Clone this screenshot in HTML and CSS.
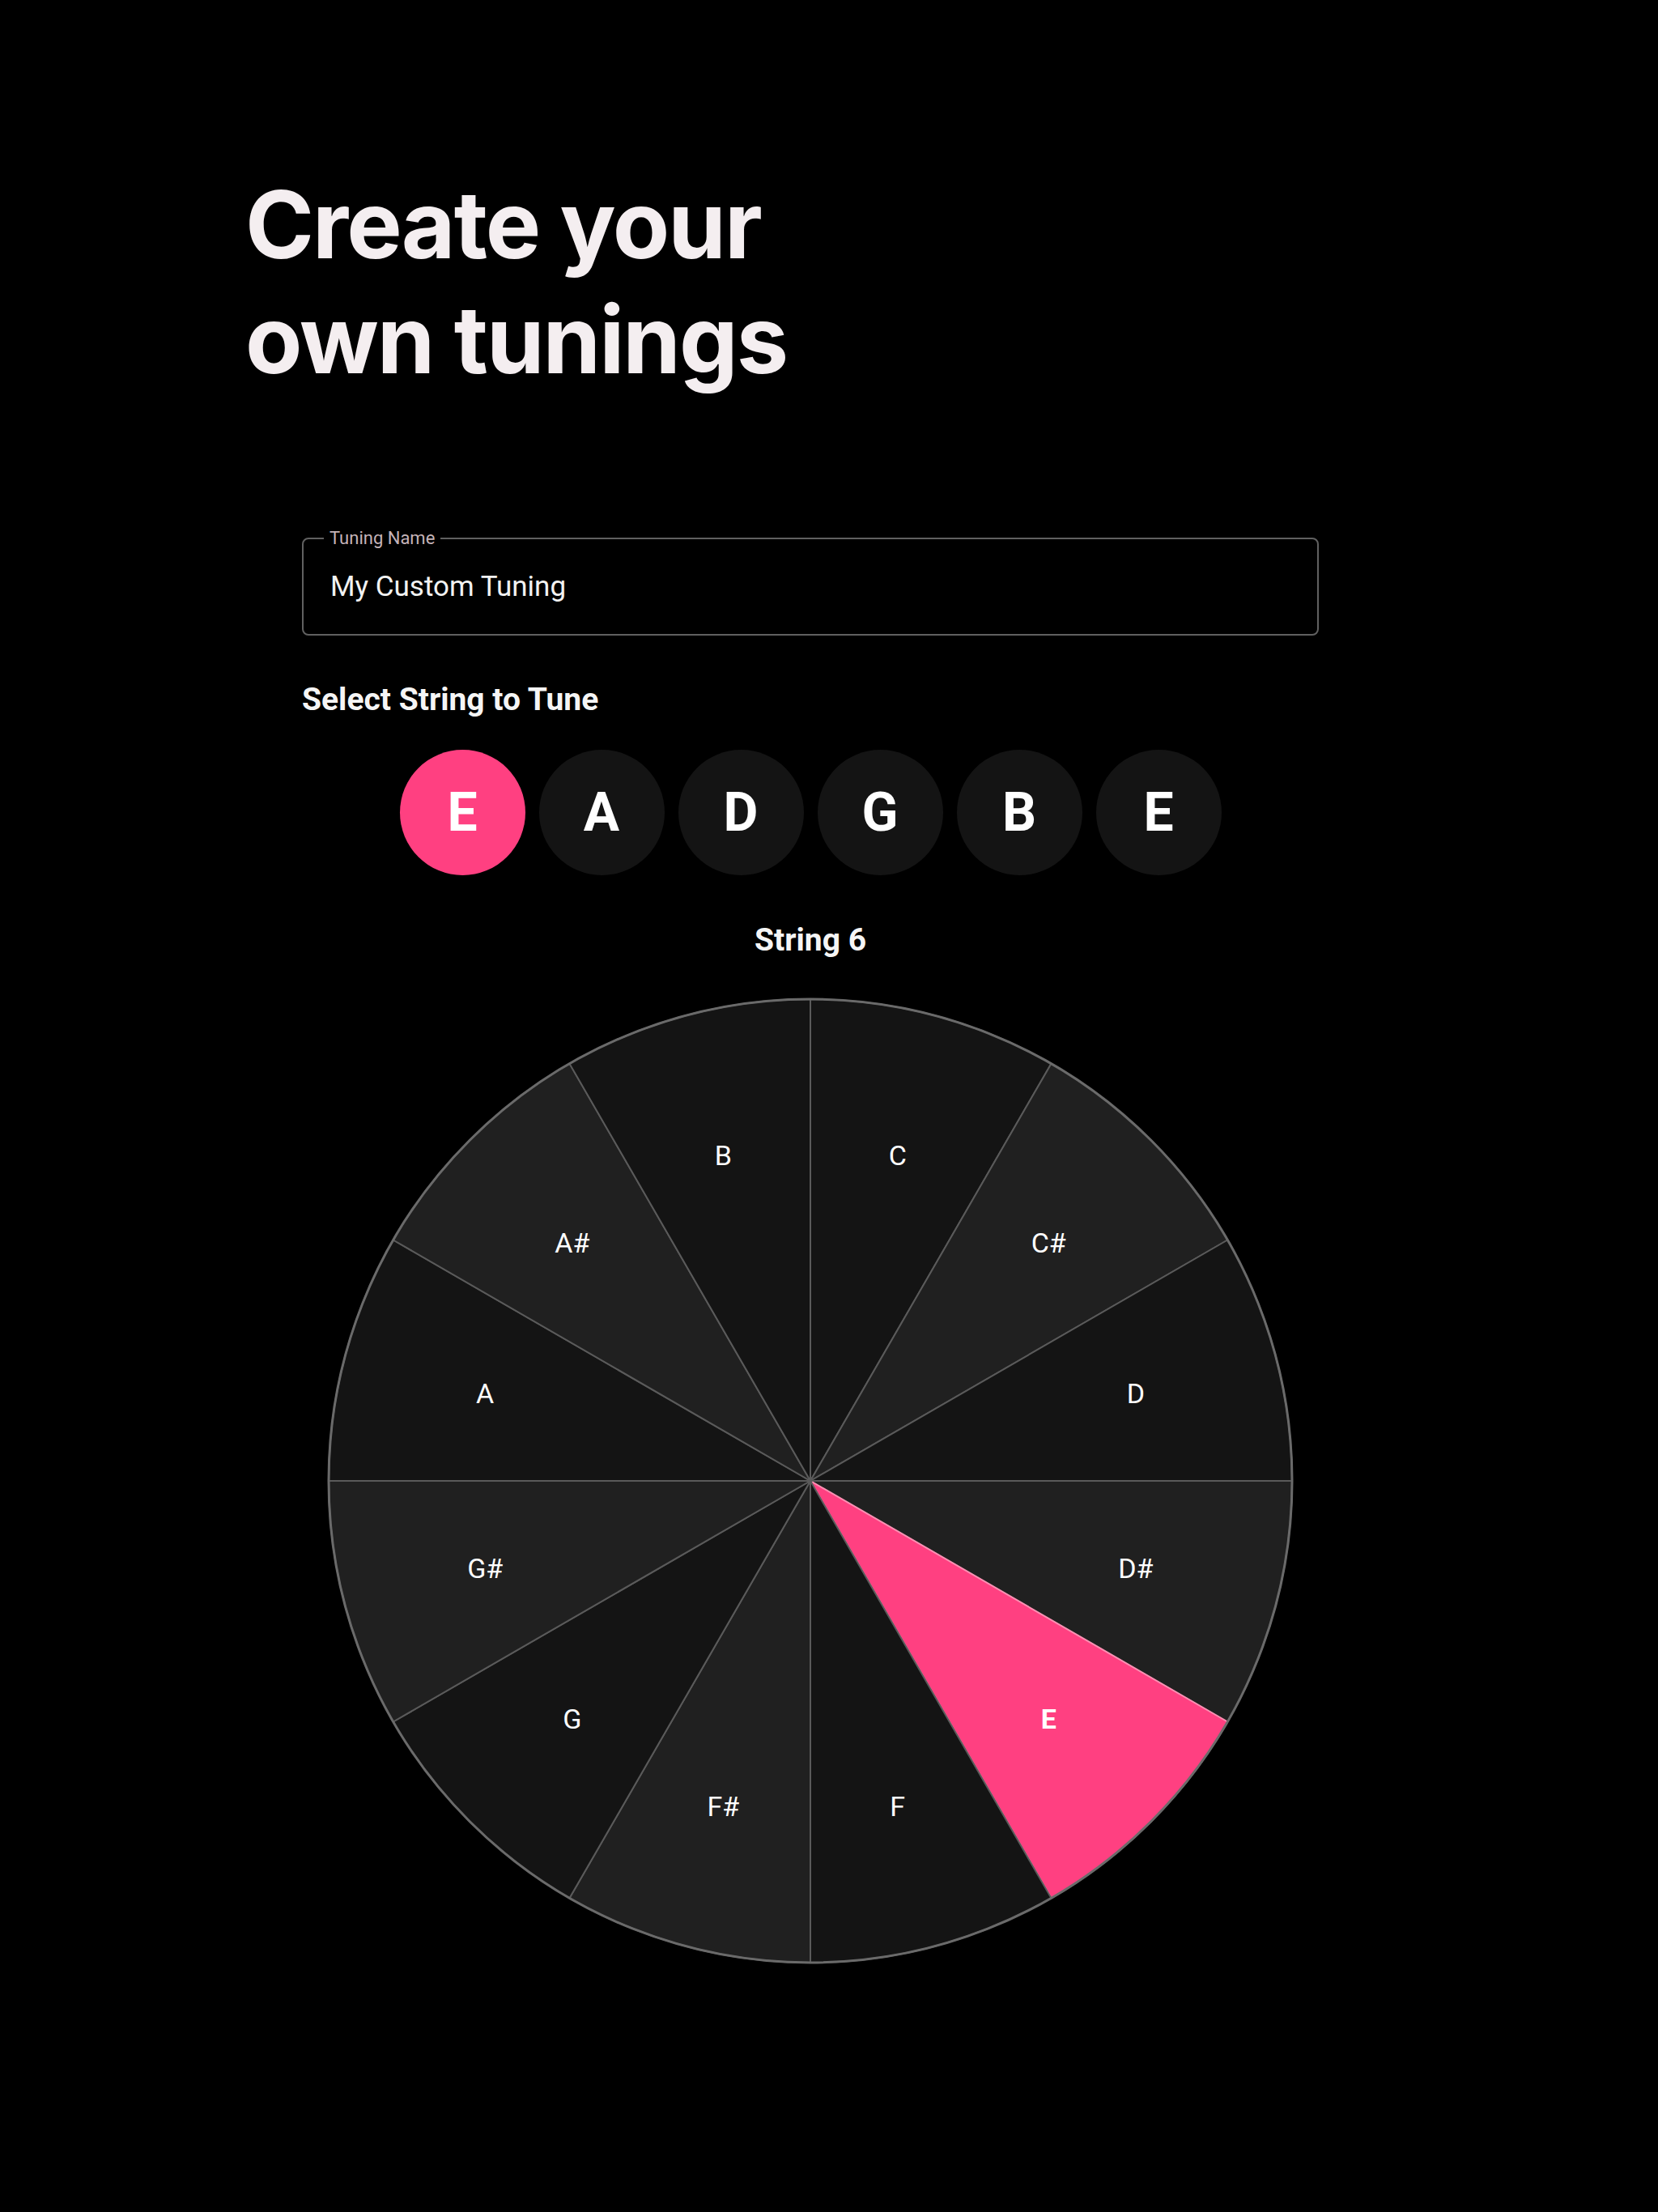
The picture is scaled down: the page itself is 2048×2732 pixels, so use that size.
FILE: index.html
```html
<!DOCTYPE html>
<html lang="en">
  <head>
    <meta charset="UTF-8" />
    <meta name="viewport" content="width=device-width, initial-scale=1.0" />
    <title>Custom Tunings</title>
    <link rel="stylesheet" href="styles.css">
  </head>
  <body>
    <main class="page">
      <h1 class="title">Create your<br />own tunings</h1>

      <section class="editor">
        <!-- Tuning name field -->
        <fieldset class="field">
          <legend>Tuning Name</legend>
          <input type="text" value="My Custom Tuning" />
        </fieldset>

        <h2 class="section-title">Select String to Tune</h2>

        <div class="strings">
          <button class="string active">E</button>
          <button class="string">A</button>
          <button class="string">D</button>
          <button class="string">G</button>
          <button class="string">B</button>
          <button class="string">E</button>
        </div>

        <h3 class="string-label">String 6</h3>

        <!-- Note wheel -->
        <div class="wheel">
          <svg width="1200" height="1200" viewBox="0 0 1200 1200">
            <g class="sectors">
              <path class="natural" d="M600 600 L600 5 A595 595 0 0 1 897.5 84.71 Z" />
              <path class="sharp" d="M600 600 L897.5 84.71 A595 595 0 0 1 1115.29 302.5 Z" />
              <path class="natural" d="M600 600 L1115.29 302.5 A595 595 0 0 1 1195 600 Z" />
              <path class="sharp" d="M600 600 L1195 600 A595 595 0 0 1 1115.29 897.5 Z" />
              <path class="selected" d="M600 600 L1115.29 897.5 A595 595 0 0 1 897.5 1115.29 Z" />
              <path class="natural" d="M600 600 L897.5 1115.29 A595 595 0 0 1 600 1195 Z" />
              <path class="sharp" d="M600 600 L600 1195 A595 595 0 0 1 302.5 1115.29 Z" />
              <path class="natural" d="M600 600 L302.5 1115.29 A595 595 0 0 1 84.71 897.5 Z" />
              <path class="sharp" d="M600 600 L84.71 897.5 A595 595 0 0 1 5 600 Z" />
              <path class="natural" d="M600 600 L5 600 A595 595 0 0 1 84.71 302.5 Z" />
              <path class="sharp" d="M600 600 L84.71 302.5 A595 595 0 0 1 302.5 84.71 Z" />
              <path class="natural" d="M600 600 L302.5 84.71 A595 595 0 0 1 600 5 Z" />
            </g>
            <circle class="rim" cx="600" cy="600" r="595" />
            <g class="notes">
              <text x="707.7" y="198.2">C</text>
              <text x="894.2" y="305.8">C#</text>
              <text x="1001.8" y="492.3">D</text>
              <text x="1001.8" y="707.7">D#</text>
              <text class="current" x="894.2" y="894.2">E</text>
              <text x="707.7" y="1001.8">F</text>
              <text x="492.3" y="1001.8">F#</text>
              <text x="305.8" y="894.2">G</text>
              <text x="198.2" y="707.7">G#</text>
              <text x="198.2" y="492.3">A</text>
              <text x="305.8" y="305.8">A#</text>
              <text x="492.3" y="198.2">B</text>
            </g>
          </svg>
        </div>
      </section>
    </main>
  </body>
</html>
```

FILE: styles.css
```css
/* Base */
* {
  box-sizing: border-box;
}

body {
  margin: 0;
  background-color: #000;
  color: #fff;
  font-family: Roboto, "Noto Sans", Arial, sans-serif;
  min-height: 2732px;
}

.page {
  width: 2002px;
}

/* Heading */
.title {
  margin: 0;
  padding: 207px 0 0 303px;
  font-family: Inter, "Noto Sans", sans-serif;
  font-weight: 700;
  font-size: 115px;
  line-height: 142px;
  letter-spacing: -0.017em;
  color: #f4eef0;
}

/* Editor column */
.editor {
  width: 1256px;
  margin: 0 auto;
}

.field {
  margin: 161px 0 0;
  padding: 0 33px 14px;
  border: 2px solid #606060;
  border-radius: 8px;
}

.field legend {
  margin-left: -8px;
  padding: 0 7px;
  font-size: 22px;
  line-height: 26px;
  color: #c4b3b8;
}

.field input {
  display: block;
  width: 100%;
  height: 91px;
  padding: 2px 0 0;
  border: none;
  outline: none;
  background: transparent;
  color: #f2f2f2;
  font-family: Roboto, sans-serif;
  font-size: 35px;
}

.section-title {
  margin: 57px 0 0;
  font-size: 39px;
  line-height: 44px;
  font-weight: 700;
  color: #f5f5f5;
}

/* String selector */
.strings {
  display: flex;
  justify-content: center;
  gap: 17px;
  margin-top: 40px;
}

.string {
  width: 155px;
  height: 155px;
  border: none;
  border-radius: 50%;
  background-color: #141414;
  color: #fff;
  font-family: Roboto, sans-serif;
  font-weight: 700;
  font-size: 66px;
  cursor: pointer;
}

.string.active {
  background-color: #ff4081;
}

.string-label {
  margin: 58px 0 0;
  text-align: center;
  font-size: 39px;
  line-height: 44px;
  font-weight: 700;
  color: #f5f5f5;
}

/* Note wheel */
.wheel {
  display: flex;
  justify-content: center;
  margin-top: 46px;
}

.wheel svg {
  display: block;
}

.sectors path {
  stroke: #5a5a5a;
  stroke-width: 2;
}

.sectors .natural {
  fill: #141414;
}

.sectors .sharp {
  fill: #202020;
}

.sectors .selected {
  fill: #ff4081;
  stroke: #ff8fb3;
}

.rim {
  fill: none;
  stroke: #6a6a6a;
  stroke-width: 3;
}

.notes text {
  fill: #fff;
  font-family: Roboto, sans-serif;
  font-size: 34px;
  text-anchor: middle;
  dominant-baseline: central;
}

.notes .current {
  font-weight: 700;
}
```
